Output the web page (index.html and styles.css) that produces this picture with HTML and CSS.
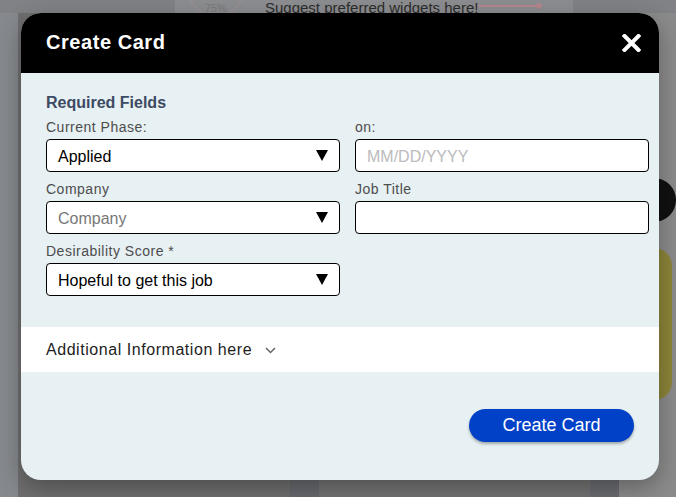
FILE: index.html
```html
<!DOCTYPE html>
<html lang="en">
<head>
    <meta charset="UTF-8">
    <meta name="viewport" content="width=device-width, initial-scale=1.0">
    <title>Create Card</title>
    <link rel="stylesheet" href="styles.css">
</head>
<body>
    <!-- Board behind the dimmed overlay -->
    <div class="board">
        <div class="widget-row">
            <div class="widget-card">
                <div class="gauge"><span>75%</span></div>
                <div class="widget-text">Suggest preferred widgets here!</div>
                <div class="widget-line"><span class="dot"></span></div>
            </div>
        </div>
        <div class="lanes">
            <div class="lane lane-edge"></div>
            <div class="lane lane-a"></div>
            <div class="lane lane-b"></div>
            <div class="lane lane-c"></div>
            <div class="lane lane-d"></div>
            <div class="lane lane-e">
                <div class="avatar"></div>
                <div class="pill"></div>
            </div>
        </div>
    </div>

    <!-- Modal -->
    <div class="modal">
        <div class="modal-header">
            <h2>Create Card</h2>
            <svg class="close" width="19" height="18" viewBox="0 0 19 18">
                <path d="M2.5 2 L16.5 16 M16.5 2 L2.5 16" stroke="#fff" stroke-width="4" stroke-linecap="square"/>
            </svg>
        </div>

        <div class="modal-body">
            <h3>Required Fields</h3>
            <div class="columns">
                <div class="column">
                    <div class="field">
                        <label>Current Phase:</label>
                        <div class="control select">
                            <span>Applied</span>
                            <svg width="12" height="11" viewBox="0 0 12 11"><polygon points="0,0 12,0 6,11" fill="#000"/></svg>
                        </div>
                    </div>
                    <div class="field">
                        <label>Company</label>
                        <div class="control select">
                            <span class="placeholder">Company</span>
                            <svg width="12" height="11" viewBox="0 0 12 11"><polygon points="0,0 12,0 6,11" fill="#000"/></svg>
                        </div>
                    </div>
                    <div class="field">
                        <label>Desirability Score *</label>
                        <div class="control select">
                            <span>Hopeful to get this job</span>
                            <svg width="12" height="11" viewBox="0 0 12 11"><polygon points="0,0 12,0 6,11" fill="#000"/></svg>
                        </div>
                    </div>
                </div>
                <div class="column">
                    <div class="field">
                        <label>on:</label>
                        <div class="control"><span class="placeholder light">MM/DD/YYYY</span></div>
                    </div>
                    <div class="field">
                        <label>Job Title</label>
                        <div class="control"></div>
                    </div>
                </div>
            </div>
        </div>

        <div class="extra">
            <span>Additional Information here</span>
            <svg width="11" height="7" viewBox="0 0 11 7"><path d="M1 1 L5.5 5.5 L10 1" fill="none" stroke="#666" stroke-width="1.5"/></svg>
        </div>

        <div class="modal-footer">
            <button class="create-btn">Create Card</button>
        </div>
    </div>
</body>
</html>
```

FILE: styles.css
```css
/* Genel */
body {
    margin: 0;
    font-family: "Liberation Sans", Arial, sans-serif;
    background-color: #86898d;
    overflow: hidden;
    height: 497px;
}

/* Arka plandaki pano (karartılmış) */
.board {
    display: flex;
    flex-direction: column;
    height: 497px;
}

.widget-row {
    display: flex;
    height: 13px;
    background-color: #808285;
    padding-left: 175px;
}

.widget-card {
    width: 398px;
    background-color: #8c8d90;
    display: flex;
    align-items: flex-start;
    padding-left: 13px;
    box-sizing: border-box;
    overflow: hidden;
}

.gauge {
    width: 52px;
    height: 52px;
    margin-top: -38px;
    border: 2px solid #978e93;
    border-radius: 50%;
    display: flex;
    align-items: flex-end;
    justify-content: center;
    font-size: 11px;
    color: #7a7a7a;
    flex-shrink: 0;
}

.gauge span {
    margin-bottom: 2px;
}

.widget-text {
    margin-left: 21px;
    font-size: 15px;
    line-height: 15px;
    color: #2c2c2c;
    white-space: nowrap;
}

.widget-line {
    width: 62px;
    height: 2px;
    margin-top: 5px;
    background-color: #b2868c;
    position: relative;
}

.widget-line .dot {
    position: absolute;
    right: -2px;
    top: -2px;
    width: 6px;
    height: 6px;
    border-radius: 50%;
    background-color: #b2868c;
}

.lanes {
    flex: 1;
    display: flex;
}

.lane-edge { width: 19px; background-color: #86898d; }
.lane-a { width: 284px; background-color: #6f6f6f; }
.lane-b { width: 30px; background-color: #67696e; }
.lane-c { width: 284px; background-color: #737373; }
.lane-d { width: 30px; background-color: #6a6c71; }
.lane-e {
    flex: 1;
    background-color: #8b8b8b;
    padding-left: 13px;
}

.avatar {
    width: 44px;
    height: 44px;
    margin-top: 165px;
    border-radius: 50%;
    background-color: #111;
}

.pill {
    width: 40px;
    height: 152px;
    margin-top: 26px;
    border-radius: 18px;
    background-color: #8b8539;
}

/* Modal */
.modal {
    position: absolute;
    left: 21px;
    top: 13px;
    width: 638px;
    height: 467px;
    border-radius: 20px;
    overflow: hidden;
    background-color: #e7f0f3;
    box-shadow: 0 8px 24px rgba(0, 0, 0, 0.3);
    display: flex;
    flex-direction: column;
}

.modal-header {
    height: 60px;
    background-color: #000;
    display: flex;
    align-items: center;
    justify-content: space-between;
    padding: 0 18px 0 25px;
    flex-shrink: 0;
}

.modal-header h2 {
    margin: 0;
    color: #fff;
    font-size: 20px;
    font-weight: bold;
    letter-spacing: 0.55px;
    margin-top: -1px;
}

.modal-body {
    padding: 20px 10px 31px 25px;
}

.modal-body h3 {
    margin: 0 0 2px;
    font-size: 16px;
    line-height: 20px;
    color: #3d4a63;
}

.columns {
    display: flex;
    gap: 15px;
}

.column {
    width: 294px;
    flex-shrink: 0;
    display: flex;
    flex-direction: column;
    gap: 5px;
}

.field label {
    display: block;
    font-size: 14px;
    line-height: 24px;
    letter-spacing: 0.5px;
    color: #4d4d4d;
}

.control {
    height: 33px;
    box-sizing: border-box;
    border: 1px solid #000;
    border-radius: 4px;
    background-color: #fff;
    padding: 2px 11px 0;
    display: flex;
    align-items: center;
    font-size: 16px;
    color: #000;
}

.select {
    justify-content: space-between;
}

.select svg {
    margin-top: -2px;
}

.placeholder {
    color: #777;
}

.placeholder.light {
    color: #bbb;
}

/* Ek bilgi bandı */
.extra {
    height: 45px;
    background-color: #fff;
    display: flex;
    align-items: center;
    padding: 0 25px;
    font-size: 16px;
    letter-spacing: 0.55px;
    color: #1d1d1d;
    gap: 13px;
}

.extra svg {
    margin-top: 2px;
}

.modal-footer {
    display: flex;
    justify-content: flex-end;
    padding: 37px 25px;
}

.create-btn {
    width: 165px;
    height: 33px;
    border: none;
    border-radius: 17px;
    background-color: #0041c8;
    color: #fff;
    font-family: "Liberation Sans", Arial, sans-serif;
    font-size: 18px;
    box-shadow: 0 2px 3px rgba(0, 0, 0, 0.3);
    cursor: pointer;
}
```
